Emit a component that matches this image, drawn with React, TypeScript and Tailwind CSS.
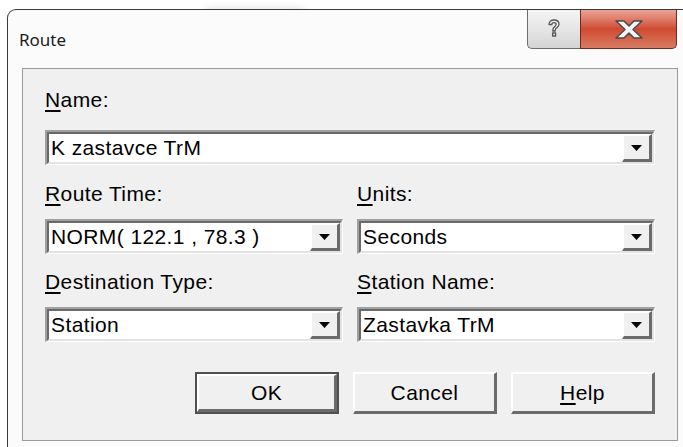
import React from "react";

const sans = "font-['Liberation_Sans',Arial,sans-serif] tracking-[0.4px]";

function Label({ text, hot }: { text: string; hot: number }) {
  return (
    <div className={`${sans} text-[21px] leading-[24px] text-black`}>
      {text.slice(0, hot)}
      <span className="underline underline-offset-[3px]">{text[hot]}</span>
      {text.slice(hot + 1)}
    </div>
  );
}

function ArrowButton() {
  return (
    <div className="flex w-[30px] items-center justify-center border-t-2 border-l-2 border-b-[3px] border-r-[3px] border-t-white border-l-white border-b-[#6b6b6b] border-r-[#6b6b6b] bg-[#f0f0f0]">
      <svg width="11" height="6" viewBox="0 0 11 6">
        <path d="M0 0h11L5.5 6z" fill="#000" />
      </svg>
    </div>
  );
}

function Combo({ value }: { value: string }) {
  return (
    <div className="h-[35px] border-t-2 border-l-2 border-b border-r border-t-[#a0a0a0] border-l-[#a0a0a0] border-b-white border-r-white">
      <div className="flex h-full border-t-2 border-l-2 border-b-2 border-r-2 border-t-[#6a6a6a] border-l-[#6a6a6a] border-b-[#e3e3e3] border-r-[#e3e3e3] bg-white">
        <div className={`${sans} flex-1 pl-[2px] text-[21px] leading-[27px] text-black`}>{value}</div>
        <ArrowButton />
      </div>
    </div>
  );
}

function PushButton({ children, isDefault }: { children: React.ReactNode; isDefault?: boolean }) {
  return (
    <div className={`h-[42px] w-[144px] ${isDefault ? "border-2 border-[#505050]" : ""}`}>
      <div className="flex h-full items-center justify-center border-t-2 border-l-2 border-b-[3px] border-r-[3px] border-t-white border-l-white border-b-[#6b6b6b] border-r-[#6b6b6b] bg-[#f0f0f0]">
        <span className={`${sans} text-[21px] leading-[24px] text-black`}>{children}</span>
      </div>
    </div>
  );
}

function CaptionButtons() {
  return (
    <div className="mr-[6px] flex h-[39px]">
      {/* help */}
      <div className="flex w-[53px] items-center justify-center rounded-bl-[5px] border border-t-0 border-r-0 border-[#6e6e6e] bg-gradient-to-b from-[#f4f4f4] via-[#e6e6e6] to-[#d4d4d4]">
        <svg width="16" height="22" viewBox="0 0 16 22">
          <path
            d="M3 6.5C3 3.5 5 2 8 2s5 1.5 5 4.3c0 2.4-2.2 3.2-3.2 4.4-.5.6-.6 1.3-.6 2.3H6.8c0-1.6.2-2.6 1-3.5 1-1.1 2.3-1.7 2.3-3.1 0-1.1-.8-1.7-2.1-1.7S5.9 5.4 5.9 6.5zM6.6 15h3v3h-3z"
            fill="#f2f2f2"
            stroke="#555"
            strokeWidth="1.3"
            strokeLinejoin="round"
          />
        </svg>
      </div>
      {/* close */}
      <div className="flex w-[97px] items-center justify-center rounded-br-[5px] border border-t-0 border-[#6e2a20] bg-gradient-to-b from-[#e9a597] via-[#cf4a30] to-[#d87a62]">
        <svg width="32" height="21" viewBox="0 0 32 21">
          <path
            d="M3 2h8l5 5 5-5h8l-9 8.5 9 8.5h-8l-5-5-5 5H3l9-8.5z"
            fill="#f5f5f5"
            stroke="#4a4a4a"
            strokeWidth="1.5"
            strokeLinejoin="round"
          />
        </svg>
      </div>
    </div>
  );
}

export default function App() {
  return (
    <div className="relative h-[447px] w-[683px] overflow-hidden bg-white pl-[7px] pt-[9px]">
      {/* faint glow behind the frame */}
      <div className="absolute left-[205px] top-[9px] h-[7px] w-[100px] rounded-full bg-[#dadada] blur-[4px]" />
      <div className="relative flex h-[460px] w-[676px] flex-col rounded-tl-[9px] border-t border-l border-[#3a3a3a] bg-[#fbfbfb]">
        <div className="flex h-[58px] items-start">
          <div className="pl-[11px] pt-[18px] font-['Noto_Sans',sans-serif] text-[17px] leading-[24px] text-[#1c1c1c]">
            Route
          </div>
          <div className="ml-auto">
            <CaptionButtons />
          </div>
        </div>
        <div className="ml-[14px] h-[373px] w-[656px] border border-[#9a9a9a] bg-[#f0f0f0] px-[22px] pt-[19px]">
          <Label text="Name:" hot={0} />
          <div className="mt-[18px]">
            <Combo value="K zastavce TrM" />
          </div>
          <div className="mt-[17px] grid grid-cols-2 gap-x-[14px]">
            <Label text="Route Time:" hot={0} />
            <Label text="Units:" hot={0} />
            <div className="mt-[13px]">
              <Combo value="NORM( 122.1 , 78.3 )" />
            </div>
            <div className="mt-[13px]">
              <Combo value="Seconds" />
            </div>
            <div className="mt-[16px]">
              <Label text="Destination Type:" hot={0} />
            </div>
            <div className="mt-[16px]">
              <Label text="Station Name:" hot={0} />
            </div>
            <div className="mt-[13px]">
              <Combo value="Station" />
            </div>
            <div className="mt-[13px]">
              <Combo value="Zastavka TrM" />
            </div>
          </div>
          <div className="mt-[30px] flex justify-end gap-[14px]">
            <PushButton isDefault>OK</PushButton>
            <PushButton>Cancel</PushButton>
            <PushButton>
              <span className="underline underline-offset-[3px]">H</span>elp
            </PushButton>
          </div>
        </div>
      </div>
    </div>
  );
}
